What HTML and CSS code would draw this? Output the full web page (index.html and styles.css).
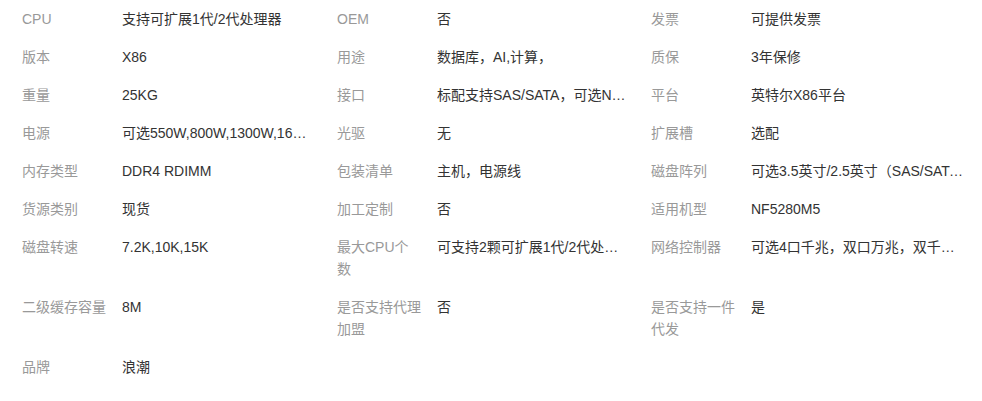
FILE: index.html
```html
<!DOCTYPE html>
<html lang="zh-CN">
<head>
<meta charset="utf-8">
<link rel="stylesheet" href="styles.css">
</head>
<body>
<div class="attrs">
  <div class="item"><div class="label">CPU</div><div class="value">支持可扩展1代/2代处理器</div></div>
  <div class="item"><div class="label">OEM</div><div class="value">否</div></div>
  <div class="item"><div class="label">发票</div><div class="value">可提供发票</div></div>

  <div class="item"><div class="label">版本</div><div class="value">X86</div></div>
  <div class="item"><div class="label">用途</div><div class="value">数据库，AI,计算，</div></div>
  <div class="item"><div class="label">质保</div><div class="value">3年保修</div></div>

  <div class="item"><div class="label">重量</div><div class="value">25KG</div></div>
  <div class="item"><div class="label">接口</div><div class="value">标配支持SAS/SATA，可选NVME</div></div>
  <div class="item"><div class="label">平台</div><div class="value">英特尔X86平台</div></div>

  <div class="item"><div class="label">电源</div><div class="value">可选550W,800W,1300W,1600W</div></div>
  <div class="item"><div class="label">光驱</div><div class="value">无</div></div>
  <div class="item"><div class="label">扩展槽</div><div class="value">选配</div></div>

  <div class="item"><div class="label">内存类型</div><div class="value">DDR4 RDIMM</div></div>
  <div class="item"><div class="label">包装清单</div><div class="value">主机，电源线</div></div>
  <div class="item"><div class="label">磁盘阵列</div><div class="value">可选3.5英寸/2.5英寸（SAS/SATA）</div></div>

  <div class="item"><div class="label">货源类别</div><div class="value">现货</div></div>
  <div class="item"><div class="label">加工定制</div><div class="value">否</div></div>
  <div class="item"><div class="label">适用机型</div><div class="value">NF5280M5</div></div>

  <div class="item"><div class="label">磁盘转速</div><div class="value">7.2K,10K,15K</div></div>
  <div class="item"><div class="label">最大CPU个<br>数</div><div class="value">可支持2颗可扩展1代/2代处理器</div></div>
  <div class="item"><div class="label">网络控制器</div><div class="value">可选4口千兆，双口万兆，双千兆网卡</div></div>

  <div class="item"><div class="label">二级缓存容量</div><div class="value">8M</div></div>
  <div class="item"><div class="label">是否支持代理<br>加盟</div><div class="value">否</div></div>
  <div class="item"><div class="label">是否支持一件<br>代发</div><div class="value">是</div></div>

  <div class="item"><div class="label">品牌</div><div class="value">浪潮</div></div>
</div>
</body>
</html>
```
FILE: styles.css
```css
html, body {
  margin: 0;
  padding: 0;
  background: #ffffff;
}

body {
  font-family: "Liberation Sans", "Noto Sans CJK SC", sans-serif;
  font-size: 14px;
  line-height: 22px;
}

.attrs {
  display: grid;
  grid-template-columns: 315px 314px 331px;
  margin-left: 22px;
}

.item {
  display: flex;
  align-items: flex-start;
  padding: 8px 0;
  min-width: 0;
}

.label {
  flex: 0 0 86px;
  margin-right: 14px;
  color: #999999;
}

.value {
  flex: 1 1 auto;
  min-width: 0;
  color: #333333;
  white-space: nowrap;
  overflow: hidden;
  text-overflow: ellipsis;
  padding-right: 24px;
}

.item:nth-child(3n) .value {
  padding-right: 16px;
}
```
